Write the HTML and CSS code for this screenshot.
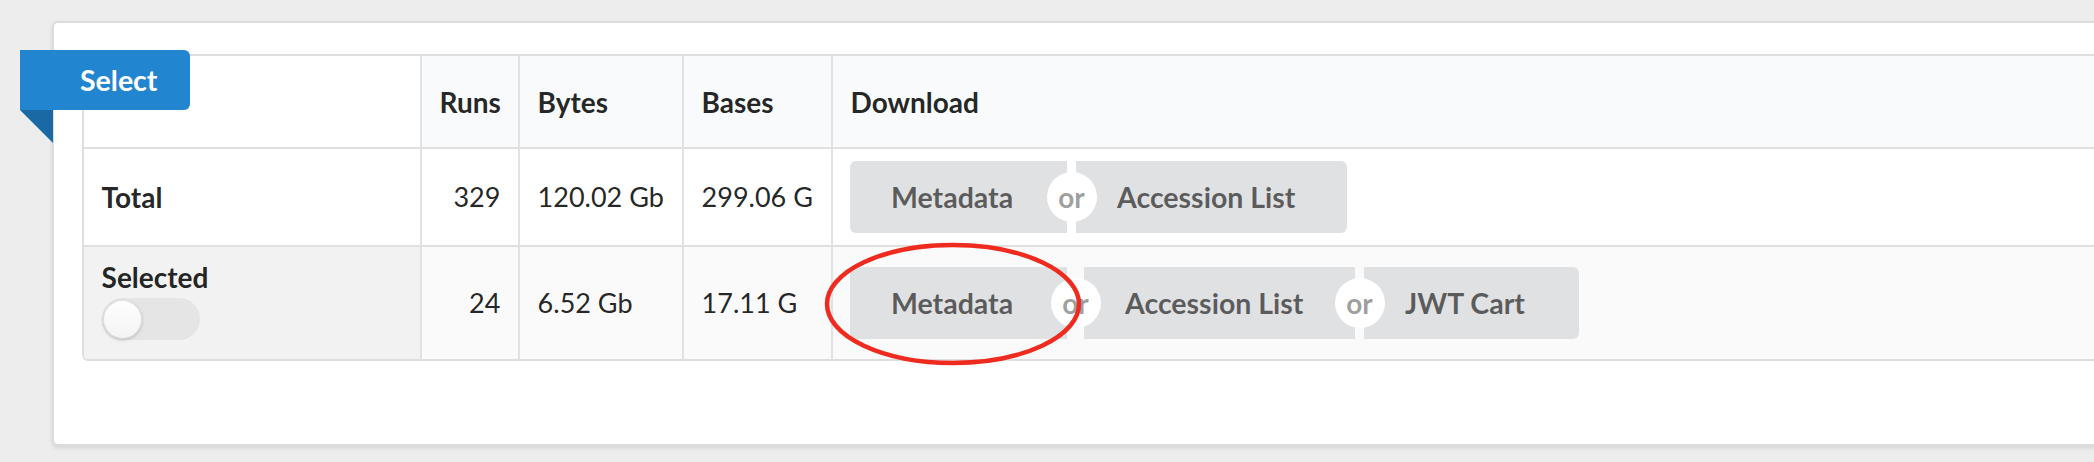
FILE: index.html
```html
<!DOCTYPE html>
<html lang="en">
<head>
<meta charset="utf-8">
<title>Select</title>
<link rel="stylesheet" href="styles.css">
</head>
<body>
<div class="card">
  <div class="ribbon">Select</div>
  <table class="stats">
    <colgroup>
      <col class="c-def">
      <col class="c-runs">
      <col class="c-bytes">
      <col class="c-bases">
      <col class="c-dl">
    </colgroup>
    <thead>
      <tr>
        <th class="blank"></th>
        <th class="num">Runs</th>
        <th>Bytes</th>
        <th>Bases</th>
        <th>Download</th>
      </tr>
    </thead>
    <tbody>
      <tr class="total">
        <td class="def">Total</td>
        <td class="num">329</td>
        <td>120.02 Gb</td>
        <td>299.06 G</td>
        <td class="dl">
          <div class="buttons">
            <button class="btn first w-meta">Metadata</button>
            <div class="or"><span class="or-dot">or</span></div>
            <button class="btn last w-acc">Accession List</button>
          </div>
        </td>
      </tr>
      <tr class="selected">
        <td class="def sel">
          <div class="sel-label">Selected</div>
          <div class="toggle"><span class="knob"></span></div>
        </td>
        <td class="num">24</td>
        <td>6.52 Gb</td>
        <td>17.11 G</td>
        <td class="dl">
          <div class="buttons">
            <button class="btn first w-meta">Metadata</button>
            <div class="or wide"><span class="or-dot">or</span></div>
            <button class="btn w-acc">Accession List</button>
            <div class="or"><span class="or-dot">or</span></div>
            <button class="btn last w-jwt">JWT Cart</button>
          </div>
        </td>
      </tr>
    </tbody>
  </table>
</div>
<svg class="annotation" width="266" height="132" viewBox="0 0 266 132">
  <ellipse cx="133" cy="66" rx="126" ry="59" fill="none" stroke="#ef2a1e" stroke-width="4.5"/>
</svg>
</body>
</html>
```
FILE: styles.css
```css
html, body {
  margin: 0;
  padding: 0;
}
body {
  background: #ededed;
  font-family: Lato, "Open Sans", "Liberation Sans", sans-serif;
  color: rgba(0, 0, 0, 0.87);
  overflow: hidden;
  width: 2094px;
  height: 462px;
  position: relative;
}
.card {
  position: relative;
  margin: 21px 0 0 52px;
  width: 2300px;
  box-sizing: border-box;
  background: #fff;
  border: 2px solid #dcdcdd;
  border-radius: 6px;
  box-shadow: 0 2px 4px 0 rgba(34, 36, 38, 0.12);
  padding: 31px 28px 83px 28px;
}
.ribbon {
  position: absolute;
  left: -34px;
  top: 27px;
  width: 170px;
  height: 60px;
  box-sizing: border-box;
  padding-left: 60px;
  display: flex;
  align-items: center;
  background: #2185d0;
  color: #fff;
  font-weight: 700;
  font-size: 28.5px;
  border-radius: 0 6px 6px 0;
  z-index: 2;
}
.ribbon::after {
  content: "";
  position: absolute;
  left: 0;
  top: 100%;
  width: 0;
  height: 0;
  border-style: solid;
  border-width: 0 33px 33px 0;
  border-color: transparent #1a69a4 transparent transparent;
}
.stats {
  width: 100%;
  table-layout: fixed;
  border-collapse: separate;
  border-spacing: 0;
  border: 2px solid #dedede;
  border-radius: 6px;
  font-size: 27px;
  line-height: 38px;
}
.c-def { width: 336px; }
.c-runs { width: 98px; }
.c-bytes { width: 164px; }
.c-bases { width: 149px; }
.stats th,
.stats td {
  box-sizing: border-box;
  padding: 0 17.6px;
  vertical-align: middle;
  text-align: left;
  border-left: 2px solid #e2e2e2;
  white-space: nowrap;
}
.stats th:first-child,
.stats td:first-child {
  border-left: none;
}
.stats th {
  height: 93px;
  background: #f9fafb;
  font-weight: 700;
  font-size: 28px;
  border-bottom: 2px solid #e0e0e0;
}
.stats th.blank {
  background: #fff;
}
.stats .num {
  text-align: right;
}
.stats tr.total td {
  height: 96px;
  background: #fff;
}
.stats tr.selected td {
  height: 114px;
  background: #fafafa;
  border-top: 2px solid #e0e0e0;
}
.stats td.def {
  font-weight: 700;
  font-size: 28px;
  background: #f6f6f6;
}
.stats tr.selected td.def {
  background: #f2f2f2;
  vertical-align: top;
  padding-top: 11px;
}
.stats tr.selected td:first-child {
  border-bottom-left-radius: 4px;
}
.sel-label {
  line-height: 38px;
}
.toggle {
  margin-top: 2px;
  width: 98px;
  height: 42px;
  border-radius: 21px;
  background: #e5e5e5;
  display: flex;
  align-items: center;
  padding-left: 1px;
  box-sizing: border-box;
}
.knob {
  width: 39px;
  height: 39px;
  border-radius: 50%;
  background: linear-gradient(#ffffff, #f3f3f3);
  box-shadow: 0 1px 3px 0 rgba(34, 36, 38, 0.25), 0 0 0 1px rgba(34, 36, 38, 0.12) inset;
}
.stats td.dl {
  padding-left: 17px;
}
.buttons {
  display: inline-flex;
  align-items: center;
  vertical-align: middle;
}
.btn {
  height: 72px;
  box-sizing: border-box;
  margin: 0;
  border: none;
  padding: 0 0 0 41px;
  text-align: left;
  background: #e0e1e2;
  color: rgba(0, 0, 0, 0.6);
  font-family: Lato, "Open Sans", "Liberation Sans", sans-serif;
  font-weight: 700;
  font-size: 28.5px;
  line-height: 72px;
  border-radius: 0;
  white-space: nowrap;
}
.btn.first {
  border-radius: 6px 0 0 6px;
}
.btn.last {
  border-radius: 0 6px 6px 0;
}
.w-meta { width: 217px; }
.w-acc { width: 271px; }
.w-jwt { width: 215px; }
.or {
  position: relative;
  z-index: 1;
  width: 9px;
  height: 72px;
  display: flex;
  align-items: center;
  justify-content: center;
}
.or.wide {
  width: 17px;
}
.or-dot {
  flex-shrink: 0;
  width: 50px;
  height: 50px;
  border-radius: 50%;
  background: #fff;
  color: rgba(0, 0, 0, 0.4);
  font-weight: 700;
  font-size: 28px;
  line-height: 50px;
  text-align: center;
}
.annotation {
  position: absolute;
  left: 820px;
  top: 238px;
  z-index: 5;
}
```
